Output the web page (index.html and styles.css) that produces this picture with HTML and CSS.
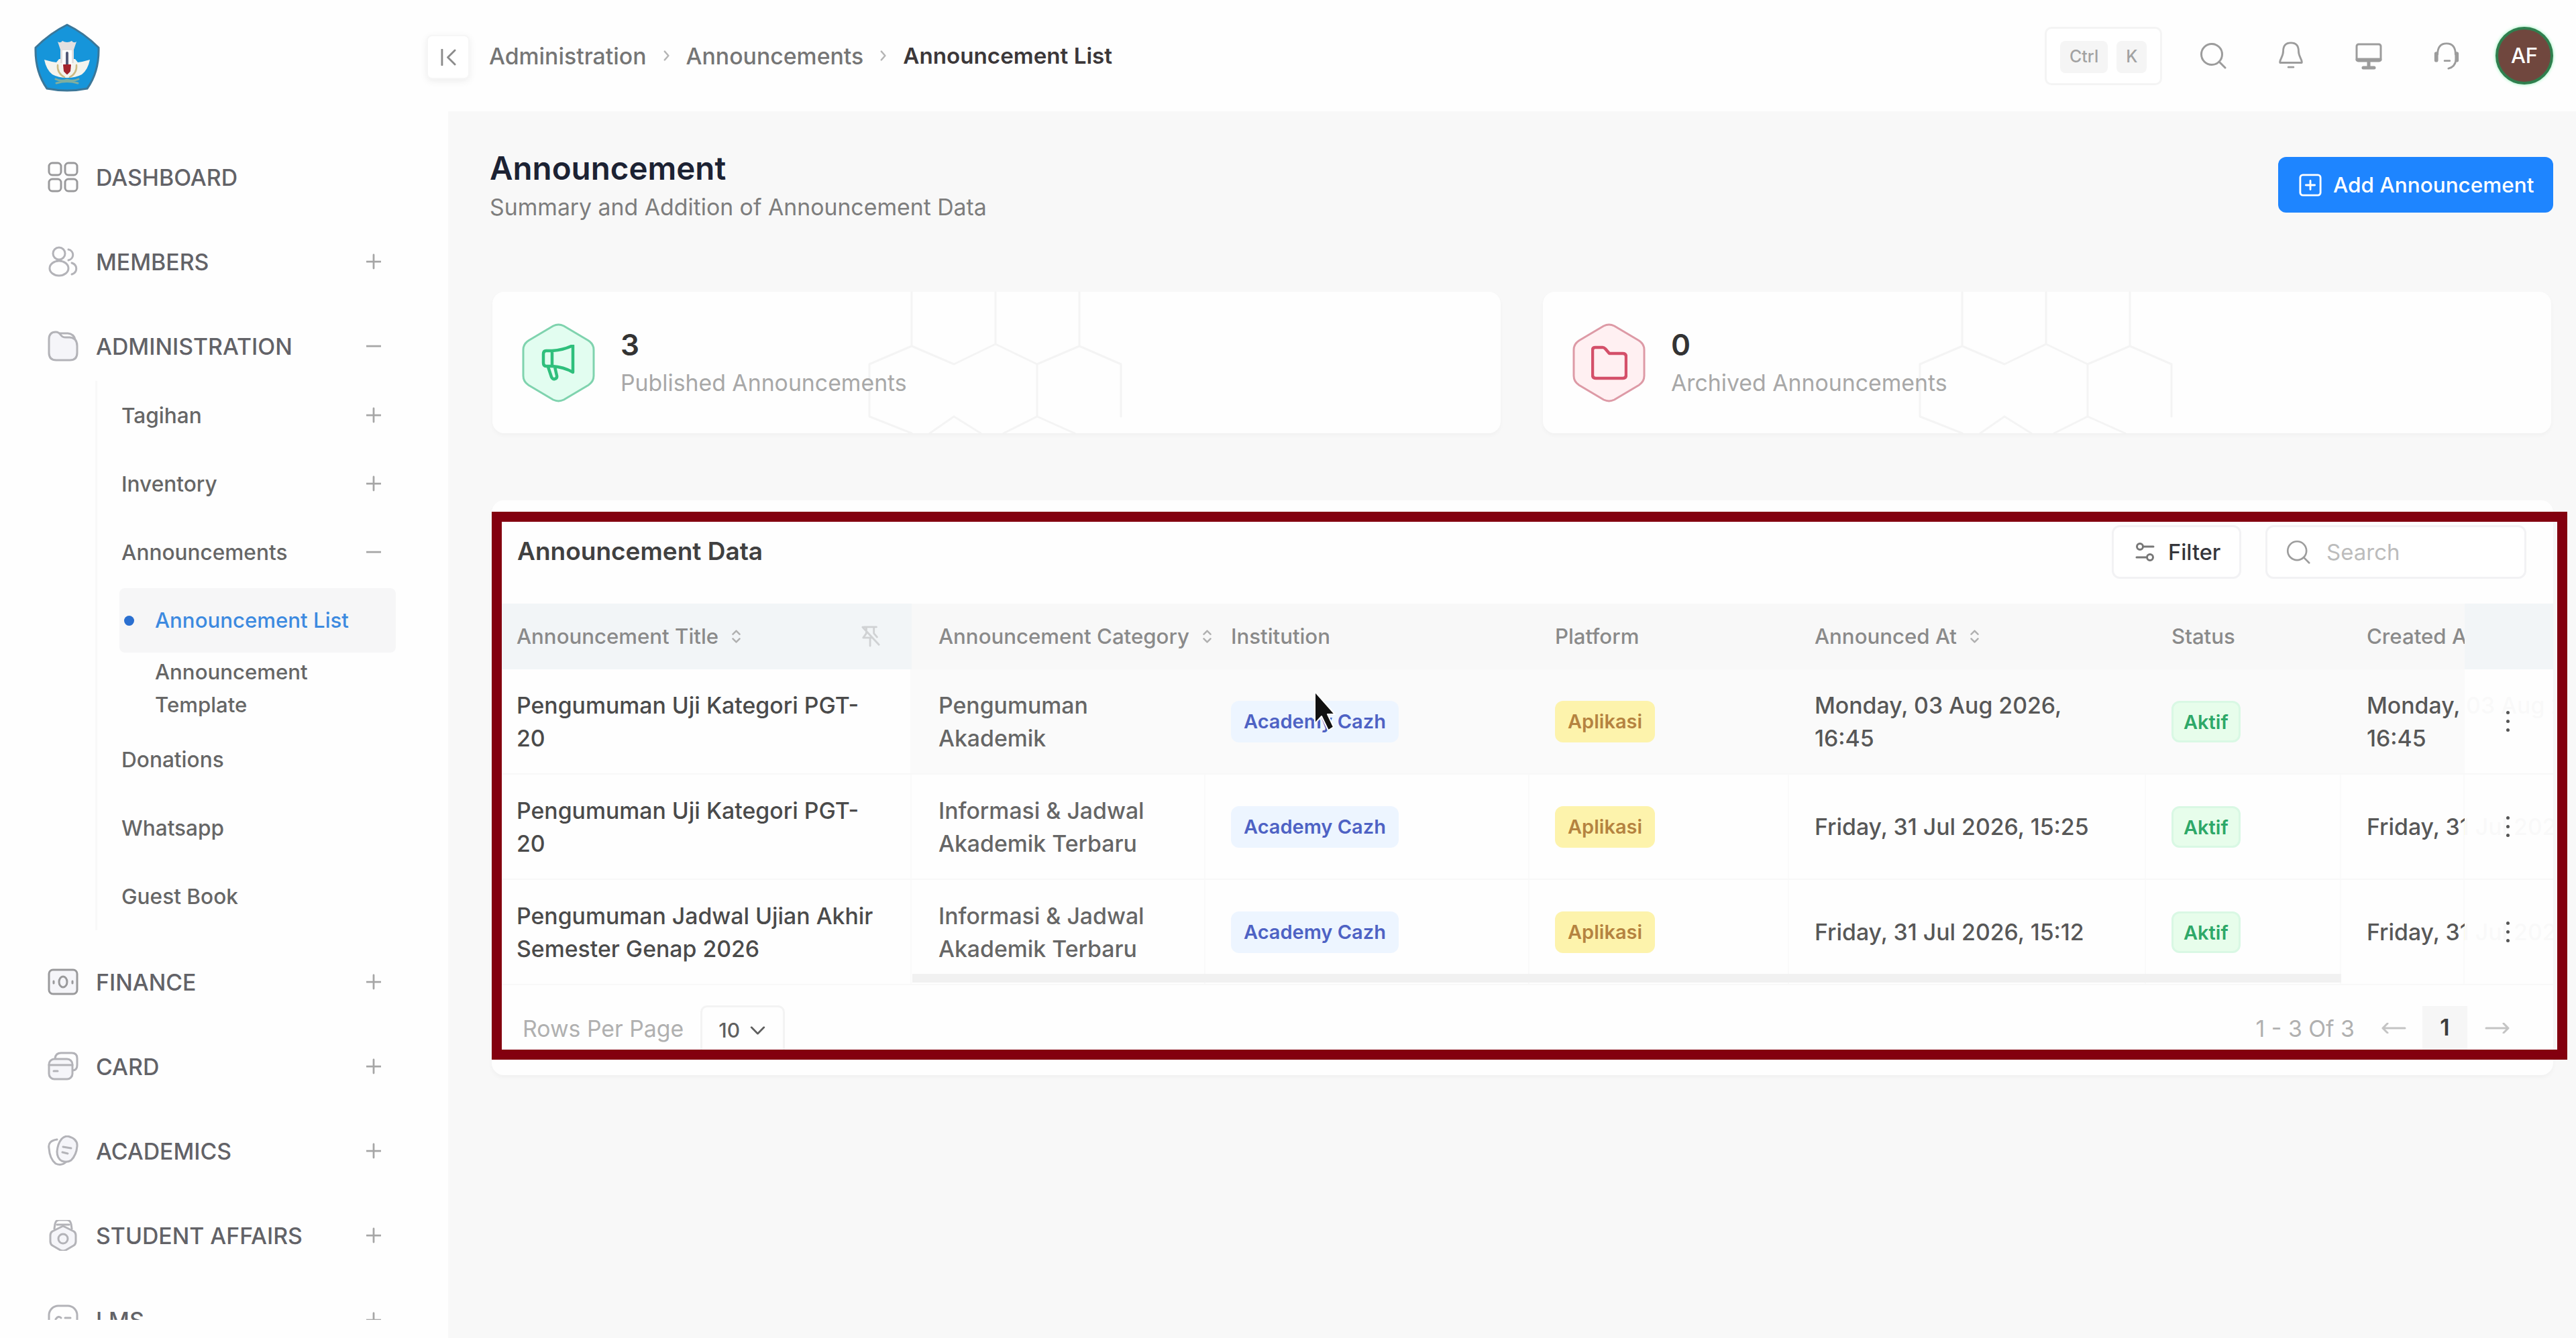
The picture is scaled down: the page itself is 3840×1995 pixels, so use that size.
FILE: index.html
```html
<!DOCTYPE html>
<html lang="en">
<head>
    <meta charset="UTF-8">
    <meta name="viewport" content="width=device-width, initial-scale=1.0">
    <title>Announcement List</title>
    <link rel="stylesheet" href="styles.css">
</head>
<body>
    <!-- shared shapes -->
    <svg class="sprite" aria-hidden="true">
        <symbol id="plus" viewBox="0 0 24 24"><path d="M12 1v22M1 12h22"/></symbol>
        <symbol id="minus" viewBox="0 0 24 24"><path d="M1 12h22"/></symbol>
        <symbol id="chevron" viewBox="0 0 12 20"><path d="M2 2l7 8-7 8"/></symbol>
        <symbol id="sort" viewBox="0 0 16 24"><path d="M2 8l6-6 6 6M2 16l6 6 6-6"/></symbol>
        <symbol id="search" viewBox="0 0 40 40"><circle cx="18" cy="18" r="15.5"/><path d="M29 29l9 9"/></symbol>
        <symbol id="honeycomb" viewBox="0 0 520 211">
            <path d="M105 0v81l63 27 62-30V0M230 78l62 30 63-27V0M105 81l-63 27v78l63 25M292 108v78l-50 25M292 186l56 25M355 81l62 27v78M168 186l-36 25M168 186l40 25"/>
        </symbol>
        <symbol id="hexagon" viewBox="0 0 110 118">
            <path d="M47 3.5q8-4 16 0l37 22q8 5 8 14v39q0 9-8 14l-37 22q-8 4-16 0l-37-22q-8-5-8-14v-39q0-9 8-14z"/>
        </symbol>
    </svg>

    <div class="app">
        <aside class="sidebar">
            <div class="brand">
                <svg class="logo" viewBox="0 0 100 102">
                    <path d="M50 2Q75 14 97 36Q98 72 80 97Q50 103 20 97Q2 72 3 36Q25 14 50 2z" fill="#1695da" stroke="#3b7799" stroke-width="3"/>
                    <path d="M16 54q10 3 18 4l4-5h24l4 5q8-1 18-4-3 15-12 22-9 5-22 5t-22-5q-9-7-12-22z" fill="#f4f4ee" stroke="none"/>
                    <path d="M36 27q4 3 7-1 7 4 14 0 3 4 7 1l-4 12v20H40V39z" fill="#e3e0e0" stroke="none"/>
                    <path d="M43 40h14v26H43z" fill="#fff" stroke="none"/>
                    <path d="M50 44v18" stroke="#555b78" stroke-width="4"/>
                    <path d="M45 62h10l-1 9-4 4-4-4z" fill="#a3232c" stroke="#a3232c" stroke-width="2"/>
                    <path d="M36 62q-1 12 10 18M64 62q1 12-10 18" stroke="#cdbb83" stroke-width="2.5"/>
                    <path d="M33 83q8 4 17 1 9 3 17-1M34 89q16-5 32 0" stroke="#7fae9f" stroke-width="3"/>
                </svg>
            </div>
            <nav class="menu">
                <div class="menu-item">
                    <svg class="menu-icon" viewBox="0 0 46 46"><rect x="2" y="2" width="18" height="18" rx="5"/><rect x="26" y="2" width="18" height="18" rx="5"/><rect x="2" y="26" width="18" height="18" rx="5"/><rect x="26" y="26" width="18" height="18" rx="5"/></svg>
                    <span>DASHBOARD</span>
                </div>
                <div class="menu-item">
                    <svg class="menu-icon light" viewBox="0 0 46 46"><circle cx="17" cy="11" r="9"/><ellipse cx="17" cy="33" rx="14" ry="11"/><path d="M31 5c9 2 9 14 0 16M36 25c9 3 9 14 0 17"/></svg>
                    <span>MEMBERS</span><svg class="toggle"><use href="#plus"/></svg>
                </div>
                <div class="menu-item">
                    <svg class="menu-icon light" viewBox="0 0 46 46"><path class="tint" d="M2 13Q2 2 12 2q5 0 8 5 2 3 7 3h6q11 1 11 13v10q0 11-11 11H13Q2 44 2 33z"/><path d="M18 4h12q9 1 11 9"/></svg>
                    <span>ADMINISTRATION</span><svg class="toggle"><use href="#minus"/></svg>
                </div>
                <div class="submenu">
                    <div class="sub-item">Tagihan<svg class="toggle"><use href="#plus"/></svg></div>
                    <div class="sub-item">Inventory<svg class="toggle"><use href="#plus"/></svg></div>
                    <div class="sub-item">Announcements<svg class="toggle"><use href="#minus"/></svg></div>
                    <div class="leaf active"><i class="dot"></i>Announcement List</div>
                    <div class="leaf">Announcement<br>Template</div>
                    <div class="sub-item">Donations</div>
                    <div class="sub-item">Whatsapp</div>
                    <div class="sub-item">Guest Book</div>
                </div>
                <div class="menu-item">
                    <svg class="menu-icon" viewBox="0 0 46 46"><rect class="tint" x="2" y="5" width="42" height="36" rx="6"/><ellipse cx="23" cy="23" rx="6" ry="8"/><path d="M9 22v3M37 22v3"/></svg>
                    <span>FINANCE</span><svg class="toggle"><use href="#plus"/></svg>
                </div>
                <div class="menu-item">
                    <svg class="menu-icon light" viewBox="0 0 46 46"><path d="M11 11q1-8 9-8h16q8 0 8 8v10q0 8-7 8"/><rect class="tint" x="2" y="12" width="35" height="30" rx="8"/><path d="M2 21h35M9 30h6"/></svg>
                    <span>CARD</span><svg class="toggle"><use href="#plus"/></svg>
                </div>
                <div class="menu-item">
                    <svg class="menu-icon light" viewBox="0 0 46 46"><path d="M14 6Q0 8 2 19q1 16 10 23 9 4 16-3"/><path class="tint" d="M30 1q15 4 14 15-1 13-9 21-6 4-14 1-7-4-7-14 1-12 7-19 4-4 9-4z"/><path d="M23 17l12 2M22 25l8 2"/></svg>
                    <span>ACADEMICS</span><svg class="toggle"><use href="#plus"/></svg>
                </div>
                <div class="menu-item">
                    <svg class="menu-icon light" viewBox="0 0 46 46"><path d="M10 13l1-7q1-6 7-6h10q6 0 7 6l1 7M14 7h18"/><path class="tint" d="M23 9l16 8q3 2 3 6v9q0 4-3 6l-12 7q-4 2-8 0L7 38q-3-2-3-6v-9q0-4 3-6z"/><circle cx="23" cy="28" r="7"/></svg>
                    <span>STUDENT AFFAIRS</span><svg class="toggle"><use href="#plus"/></svg>
                </div>
                <div class="menu-item">
                    <svg class="menu-icon light" viewBox="0 0 46 46"><rect x="2" y="2" width="42" height="42" rx="14"/><path d="M12 22q4-6 8-2M26 20h8"/></svg>
                    <span>LMS</span><svg class="toggle"><use href="#plus"/></svg>
                </div>
            </nav>
        </aside>

        <main class="main">
            <header class="topbar">
                <button class="collapse"><svg viewBox="0 0 24 26"><path d="M2 1v24M22 2L11 13l11 11"/></svg></button>
                <div class="breadcrumb">
                    <span>Administration</span>
                    <svg><use href="#chevron"/></svg>
                    <span>Announcements</span>
                    <svg><use href="#chevron"/></svg>
                    <span class="current">Announcement List</span>
                </div>
                <div class="tools">
                    <div class="shortcut"><kbd>Ctrl</kbd><kbd>K</kbd></div>
                    <svg class="tool"><use href="#search"/></svg>
                    <svg class="tool" viewBox="0 0 40 44"><path d="M20 2C11 2 8 8 8 15c0 9-6 13-5 18h34c1-5-5-9-5-18 0-7-3-13-12-13zM16 40h8"/></svg>
                    <svg class="tool" viewBox="0 0 40 40"><rect x="2" y="3" width="36" height="25" rx="3"/><path d="M3 26h34M20 28v9M12 38h16" stroke-width="5"/></svg>
                    <svg class="tool" viewBox="0 0 40 44"><path d="M6 20Q6 3 20 3t14 17M17 30h8M35 28q-2 12-12 14"/><path d="M4 19v10M36 19v10" stroke-width="6"/></svg>
                    <div class="avatar">AF</div>
                </div>
            </header>

            <section class="page-head">
                <div>
                    <h1>Announcement</h1>
                    <p>Summary and Addition of Announcement Data</p>
                </div>
                <button class="add-btn">
                    <svg viewBox="0 0 36 36"><rect x="2" y="2" width="32" height="32" rx="4"/><path d="M18 11v14M11 18h14"/></svg>
                    <span>Add Announcement</span>
                </button>
            </section>

            <section class="stats">
                <div class="stat green">
                    <svg class="comb"><use href="#honeycomb"/></svg>
                    <div class="hex">
                        <svg class="hex-bg"><use href="#hexagon"/></svg>
                        <svg class="hex-icon" viewBox="0 0 54 54"><path d="M8 9h9q17-1 31-8v40q-14-8-31-9H8q-4 0-4-5V14q0-5 4-5zM17 9v23M11 33l5 15q2 4 5 3 4-1 3-5l-3-13"/></svg>
                    </div>
                    <div><b>3</b><span>Published Announcements</span></div>
                </div>
                <div class="stat red">
                    <svg class="comb"><use href="#honeycomb"/></svg>
                    <div class="hex">
                        <svg class="hex-bg"><use href="#hexagon"/></svg>
                        <svg class="hex-icon" viewBox="0 0 54 54"><path d="M2 8q0-4 4-4h11q2 0 4 2l6 7h20q5 0 5 5v27q0 5-5 5H7q-5 0-5-5z"/></svg>
                    </div>
                    <div><b>0</b><span>Archived Announcements</span></div>
                </div>
            </section>

            <section class="panel">
                <div class="panel-head">
                    <h2>Announcement Data</h2>
                    <button class="filter">
                        <svg viewBox="0 0 30 30"><circle cx="7" cy="7" r="4.5"/><path d="M12 7h15M2 23h14"/><circle cx="22" cy="23" r="4.5"/></svg>
                        <span>Filter</span>
                    </button>
                    <div class="search"><svg><use href="#search"/></svg><span>Search</span></div>
                </div>

                <div class="table">
                    <div class="row head">
                        <div class="cell pinned">Announcement Title<svg class="sort"><use href="#sort"/></svg>
                            <svg class="pin" viewBox="0 0 32 34"><path d="M5 2h20M9 2v10l-5 7h15M21 3v9l5 6M15 20v12M3 2l26 28"/></svg>
                        </div>
                        <div class="cell">Announcement Category<svg class="sort"><use href="#sort"/></svg></div>
                        <div class="cell">Institution</div>
                        <div class="cell">Platform</div>
                        <div class="cell">Announced At<svg class="sort"><use href="#sort"/></svg></div>
                        <div class="cell">Status</div>
                        <div class="cell">Created At</div>
                        <div class="cell action"></div>
                    </div>
                    <div class="row hovered">
                        <div class="cell title">Pengumuman Uji Kategori PGT-<br>20</div>
                        <div class="cell category">Pengumuman<br>Akademik</div>
                        <div class="cell"><span class="badge blue">Academy Cazh</span></div>
                        <div class="cell"><span class="badge yellow">Aplikasi</span></div>
                        <div class="cell">Monday, 03 Aug 2026,<br>16:45</div>
                        <div class="cell"><span class="badge success">Aktif</span></div>
                        <div class="cell">Monday, 03 Aug 2026,<br>16:45</div>
                        <div class="cell action"><i class="dots"></i></div>
                    </div>
                    <div class="row">
                        <div class="cell title">Pengumuman Uji Kategori PGT-<br>20</div>
                        <div class="cell category">Informasi &amp; Jadwal<br>Akademik Terbaru</div>
                        <div class="cell"><span class="badge blue">Academy Cazh</span></div>
                        <div class="cell"><span class="badge yellow">Aplikasi</span></div>
                        <div class="cell">Friday, 31 Jul 2026, 15:25</div>
                        <div class="cell"><span class="badge success">Aktif</span></div>
                        <div class="cell">Friday, 31 Jul 2026, 15:25</div>
                        <div class="cell action"><i class="dots"></i></div>
                    </div>
                    <div class="row">
                        <div class="cell title">Pengumuman Jadwal Ujian Akhir<br>Semester Genap 2026</div>
                        <div class="cell category">Informasi &amp; Jadwal<br>Akademik Terbaru</div>
                        <div class="cell"><span class="badge blue">Academy Cazh</span></div>
                        <div class="cell"><span class="badge yellow">Aplikasi</span></div>
                        <div class="cell">Friday, 31 Jul 2026, 15:12</div>
                        <div class="cell"><span class="badge success">Aktif</span></div>
                        <div class="cell">Friday, 31 Jul 2026, 15:12</div>
                        <div class="cell action"><i class="dots"></i></div>
                    </div>
                    <div class="scrollbar"></div>
                </div>

                <div class="pager">
                    <span class="per-page">Rows Per Page</span>
                    <div class="select">10<svg viewBox="0 0 24 14"><path d="M2 2l10 10L22 2"/></svg></div>
                    <span class="range">1 - 3 Of 3</span>
                    <svg class="arrow" viewBox="0 0 38 16"><path d="M36 8H3M10 1L3 8l7 7"/></svg>
                    <span class="page">1</span>
                    <svg class="arrow" viewBox="0 0 38 16"><path d="M2 8h33M28 1l7 7-7 7"/></svg>
                </div>
                <div class="frame"></div>
            </section>
        </main>
    </div>

    <svg class="cursor" viewBox="0 0 34 62"><path d="M2 2v48l10-11 10 21 8-5-9-19h11z"/></svg>
</body>
</html>
```

FILE: styles.css
```css
* {
    box-sizing: border-box;
}

body {
    margin: 0;
    background: #fefefe;
    font-family: Inter, "Liberation Sans", sans-serif;
    font-size: 34px;
    font-weight: 500;
    color: #5c5c5c;
}

h1, h2, p {
    margin: 0;
}

button {
    font: inherit;
    padding: 0;
}

svg {
    fill: none;
    stroke: currentColor;
    stroke-width: 3;
    stroke-linecap: round;
    stroke-linejoin: round;
    flex-shrink: 0;
}

.sprite {
    display: none;
}

.app {
    display: flex;
    height: 1995px;
    overflow: hidden;
}

/* sidebar */
.sidebar {
    width: 668px;
    flex-shrink: 0;
    background: #fefefe;
}

.brand {
    height: 201px;
    padding: 35px 0 0 50px;
}

.logo {
    width: 100px;
    height: 102px;
}

.menu {
    height: 1767px;
    overflow: hidden;
}

.menu-item {
    height: 126px;
    display: flex;
    align-items: center;
    padding: 0 100px 0 71px;
    font-size: 33.8px;
    color: #626267;
}

.menu-icon {
    width: 46px;
    height: 46px;
    margin-right: 26px;
    color: #9a9a9c;
}

.menu-icon.light {
    color: #b3b3b8;
}

.tint {
    fill: #f5f5f9;
}

.toggle {
    width: 22px;
    height: 24px;
    margin-left: auto;
    color: #a6a6a6;
}

.submenu {
    margin: -11px 0 14px 142px;
    border-left: 3px solid #f8f8f8;
    font-size: 31.6px;
    color: #666;
}

.sub-item {
    height: 102px;
    display: flex;
    align-items: center;
    padding: 0 100px 0 36px;
}

.leaf {
    height: 105px;
    display: flex;
    align-items: center;
    margin: 0 78px 0 33px;
    padding: 0 0 4px 53px;
    font-size: 31.2px;
    line-height: 49px;
}

.leaf.active {
    height: 96px;
    margin-top: 3px;
    margin-bottom: 3px;
    padding: 0;
    border-radius: 8px;
    background: #f6f6f7;
    color: #3d8ae0;
}

.dot {
    width: 15px;
    height: 15px;
    margin: 0 31px 0 7px;
    border-radius: 50%;
    background: #2a6fd0;
}

/* top bar */
.main {
    flex: 1;
    min-width: 0;
    background: #f8f8f8;
}

.topbar {
    height: 166px;
    display: flex;
    align-items: center;
    padding-right: 34px;
    background: #fefefe;
}

.collapse {
    width: 64px;
    height: 66px;
    margin: 4px 29px 0 -32px;
    display: flex;
    align-items: center;
    justify-content: center;
    border: 2px solid #f6f6f6;
    border-radius: 8px;
    background: #fff;
    box-shadow: 0 3px 12px rgba(0, 0, 0, 0.07);
    color: #8b8b8b;
}

.collapse svg {
    width: 23px;
    height: 25px;
}

.breadcrumb {
    display: flex;
    align-items: center;
    font-size: 33.8px;
    color: #757575;
}

.breadcrumb svg {
    width: 10px;
    height: 16px;
    margin: 0 24px 0 25px;
    color: #b5b5b5;
}

.breadcrumb .current {
    font-size: 33.2px;
    color: #3b3739;
    font-weight: 600;
}

.tools {
    margin-left: auto;
    display: flex;
    align-items: center;
    color: #9c9c9c;
}

.shortcut {
    display: flex;
    gap: 13px;
    width: 175px;
    height: 87px;
    padding: 18px 20px;
    margin-right: 56px;
    border: 3px solid #f4f4f4;
    border-radius: 10px;
    background: #fff;
}

kbd {
    height: 48px;
    padding: 0 14px;
    border-radius: 8px;
    background: #f5f5f5;
    font-family: inherit;
    font-size: 25px;
    line-height: 46px;
    color: #a2a2a2;
}

.tool {
    width: 40px;
    height: 42px;
    margin-right: 76px;
}

.tool:nth-of-type(4) {
    margin-right: 53px;
}

.avatar {
    width: 86px;
    height: 86px;
    border: 4px solid #2f7f4e;
    border-radius: 50%;
    box-shadow: 0 0 5px #8df0b5;
    background: #70473e;
    color: #fff;
    font-size: 31px;
    line-height: 78px;
    text-align: center;
}

/* page heading */
.page-head {
    display: flex;
    justify-content: space-between;
    height: 269px;
    padding: 52px 34px 0 62px;
    color: #7d7d7d;
}

h1 {
    font-size: 47.5px;
    font-weight: 600;
    line-height: 66px;
    color: #1c2233;
}

.page-head p {
    font-size: 33.8px;
    line-height: 50px;
    font-weight: 400;
}

.add-btn {
    width: 410px;
    height: 83px;
    margin-top: 16px;
    display: flex;
    align-items: center;
    padding-left: 31px;
    border: 0;
    border-radius: 12px;
    background: #1e85ff;
    color: #fff;
    font-size: 31.5px;
}

.add-btn svg {
    width: 34px;
    height: 34px;
    margin-right: 17px;
}

/* statistic cards */
.stats {
    display: flex;
    gap: 63px;
    padding: 0 37px 0 66px;
}

.stat {
    position: relative;
    flex: 1;
    height: 211px;
    display: flex;
    align-items: center;
    gap: 38px;
    padding-left: 44px;
    border-radius: 18px;
    background: #fefefe;
    box-shadow: 0 3px 6px rgba(0, 0, 0, 0.03);
}

.comb {
    position: absolute;
    left: 520px;
    top: 0;
    width: 520px;
    height: 211px;
    color: #f4f4f4;
}

.hex {
    position: relative;
    width: 109px;
    height: 118px;
    display: flex;
    align-items: center;
    justify-content: center;
}

.hex-bg {
    position: absolute;
    inset: 0;
    width: 109px;
    height: 118px;
}

.hex-icon {
    position: relative;
    width: 54px;
    height: 54px;
    stroke-width: 4.5;
}

.green .hex-bg {
    fill: #e2fdf0;
    color: #7fd3ae;
}

.green .hex-icon {
    color: #2fbf7c;
}

.red .hex-bg {
    fill: #fff0f2;
    color: #dd9aa6;
}

.red .hex-icon {
    color: #d4506a;
}

.stat b,
.stat div > span {
    position: relative;
    display: block;
}

.stat b {
    font-size: 44px;
    font-weight: 600;
    line-height: 60px;
    color: #333;
}

.stat span {
    font-size: 33.8px;
    line-height: 54px;
    font-weight: 400;
    color: #a8a8a8;
}

/* announcement table */
.panel {
    position: relative;
    height: 857px;
    margin: 100px 34px 0 65px;
    border-radius: 18px;
    background: #fefefe;
    box-shadow: 0 4px 6px rgba(0, 0, 0, 0.03);
}

.panel-head {
    height: 154px;
    display: flex;
    align-items: flex-start;
    padding: 37px 40px 0 38px;
}

h2 {
    margin-right: auto;
    font-size: 37px;
    font-weight: 600;
    line-height: 77px;
    color: #404040;
}

.filter,
.search {
    height: 80px;
    display: flex;
    align-items: center;
    border: 3px solid #f2f2f4;
    border-radius: 12px;
    background: #fff;
}

.filter {
    width: 193px;
    margin-right: 36px;
    padding-left: 32px;
    color: #35353b;
    font-size: 32.5px;
}

.filter svg {
    width: 30px;
    height: 32px;
    margin-right: 19px;
    color: #777;
}

.search {
    width: 389px;
    padding-left: 28px;
    color: #bcbcbc;
    font-size: 33px;
    font-weight: 400;
}

.search svg {
    width: 36px;
    height: 36px;
    margin-right: 24px;
    color: #9d9d9d;
}

.table {
    position: relative;
    margin-left: 15px;
    overflow: hidden;
}

.row {
    display: grid;
    grid-template-columns: 611px 438px 483px 387px 532px 291px 184px 132px;
    height: 157px;
    border-bottom: 2px solid #f8f8f8;
    line-height: 49px;
    font-size: 33.8px;
    color: #575757;
}

.cell {
    position: relative;
    display: flex;
    align-items: center;
    padding-left: 38px;
    border-right: 2px solid #fafafa;
    white-space: nowrap;
}

.cell:first-child {
    padding-left: 22px;
}

.cell:nth-child(2) {
    padding-left: 40px;
}

.title {
    color: #4a4a4a;
}

.category {
    color: #666;
}

.head {
    height: 98px;
    border: 0;
    background: #f8f8f8;
    font-size: 31.2px;
    color: #8a8a8a;
}

.head .cell {
    border: 0;
}

.pinned {
    background: #f2f5f7;
}

.sort {
    width: 15px;
    height: 20px;
    margin-left: 19px;
    color: #b0b0b0;
}

.pin {
    width: 30px;
    height: 34px;
    margin-left: auto;
    margin-right: 46px;
    color: #d0d2d4;
}

.hovered {
    background: #fafafa;
}

.hovered .title {
    background: #fefefe;
}

.row .action {
    padding: 0;
    justify-content: center;
    border: 0;
    background: rgba(254, 254, 254, 0.97);
}

.head .action {
    background: #f2f5f7;
}

.dots {
    width: 5px;
    height: 5px;
    margin-right: 4px;
    border-radius: 50%;
    background: #555;
    box-shadow: 0 -13px #555, 0 13px #555;
}

.badge {
    height: 62px;
    padding: 0 19px;
    border-radius: 12px;
    font-size: 29px;
    font-weight: 600;
    line-height: 62px;
}

.blue {
    background: #edf5ff;
    color: #4e62c4;
}

.yellow {
    background: #fdf3ac;
    color: #b58340;
}

.success {
    padding: 0 15px;
    border: 3px solid #d9f8e4;
    line-height: 57px;
    background: #e7fdeb;
    color: #2ea868;
}

.scrollbar {
    position: absolute;
    left: 612px;
    bottom: 4px;
    width: 2130px;
    height: 13px;
    background: #f1f1f1;
}

.pager {
    height: 100px;
    display: flex;
    align-items: center;
    padding: 0 64px 0 46px;
    margin-top: 14px;
    color: #b0b0b0;
}

.per-page,
.range {
    font-size: 33.8px;
    font-weight: 400;
}

.select {
    width: 126px;
    height: 80px;
    margin: 12px auto 0 25px;
    display: flex;
    align-items: center;
    padding: 0 0 6px 24px;
    border: 3px solid #f3f3f3;
    border-radius: 10px;
    font-size: 30px;
    color: #5f5f5f;
}

.select svg {
    width: 23px;
    height: 13px;
    margin-left: 15px;
}

.arrow {
    width: 38px;
    height: 16px;
    color: #c4c4c4;
}

.range {
    margin-right: 39px;
}

.page {
    width: 67px;
    height: 66px;
    margin: 0 26px 0 24px;
    background: #f6f6f6;
    font-weight: 600;
    line-height: 64px;
    text-align: center;
    color: #3d3d3d;
}

/* highlight box drawn over the panel */
.frame {
    position: absolute;
    left: 0;
    top: 17px;
    width: 3094px;
    height: 817px;
    border: 15px solid #83000f;
}

.cursor {
    position: absolute;
    left: 1958px;
    top: 1029px;
    width: 34px;
    height: 62px;
    fill: #111;
    stroke: #fff;
    stroke-width: 2;
}
```
